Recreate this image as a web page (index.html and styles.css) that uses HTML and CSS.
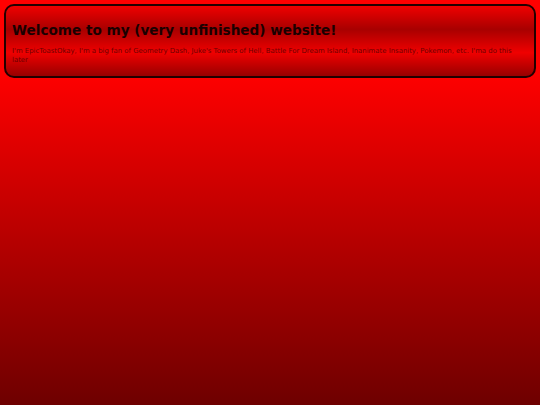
FILE: index.html
```
<!DOCTYPE html>
<html>
<head>
<meta charset="utf-8">
<link rel="stylesheet" href="styles.css">
</head>
<body>
<div class="box">
<h1 class="title">Welcome to my (very unfinished) website!</h1>
<p class="intro">I'm EpicToastOkay, I'm a big fan of Geometry Dash, Juke's Towers of Hell, Battle For Dream Island, Inanimate Insanity, Pokemon, etc. I'ma do this later</p>
</div>
</body>
</html>
```
FILE: styles.css
```
html, body {
  margin: 0;
  height: 100%;
}
body {
  padding: 4px;
  box-sizing: border-box;
  background: linear-gradient(to bottom, #ff0000 18%, #6e0000 100%);
  font-family: "DejaVu Sans", Verdana, sans-serif;
}
.box {
  border: 2px solid #220000;
  border-radius: 10px;
  background: linear-gradient(to bottom, #f00000, #a80000, #f00000, #980000);
  padding: 16px 6px 11px 6px;
}
.title {
  margin: 0 0 9px;
  font-size: 13.6px;
  line-height: 16px;
  font-weight: bold;
  color: #1a0000;
}
.intro {
  margin: 0;
  font-size: 6.9px;
  line-height: 9px;
  color: #6a0000;
}
```
